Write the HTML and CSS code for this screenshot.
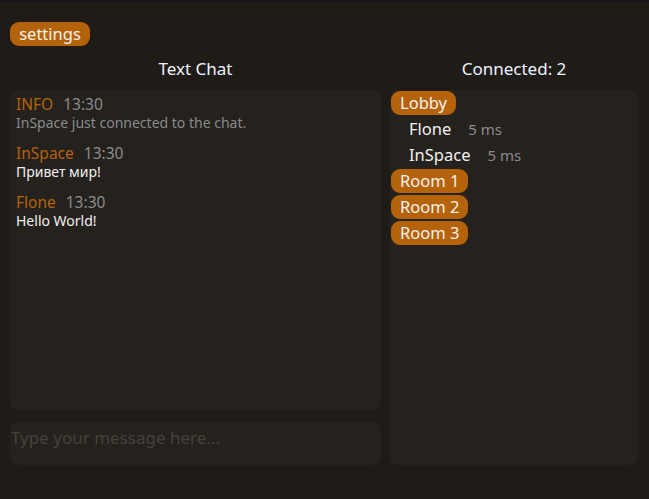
FILE: index.html
```html
<!DOCTYPE html>
<html>
<head>
<meta charset="utf-8">
<link rel="stylesheet" href="styles.css">
</head>
<body>
<div class="app">
  <div class="toolbar"><button class="pill settings">settings</button></div>
  <div class="columns">
    <div class="col chat-col">
      <div class="heading">Text Chat</div>
      <div class="panel messages">
        <div class="msg">
          <div class="meta"><span class="name">INFO</span><span class="time">13:30</span></div>
          <div class="text info">InSpace just connected to the chat.</div>
        </div>
        <div class="msg">
          <div class="meta"><span class="name">InSpace</span><span class="time">13:30</span></div>
          <div class="text">Привет мир!</div>
        </div>
        <div class="msg">
          <div class="meta"><span class="name">Flone</span><span class="time">13:30</span></div>
          <div class="text">Hello World!</div>
        </div>
      </div>
      <div class="panel input">Type your message here...</div>
    </div>
    <div class="col users-col">
      <div class="heading">Connected: 2</div>
      <div class="panel rooms">
        <div class="pill room">Lobby</div>
        <div class="user"><span class="uname">Flone</span><span class="ping">5 ms</span></div>
        <div class="user"><span class="uname">InSpace</span><span class="ping">5 ms</span></div>
        <div class="pill room">Room 1</div>
        <div class="pill room">Room 2</div>
        <div class="pill room">Room 3</div>
      </div>
    </div>
  </div>
</div>
</body>
</html>
```
FILE: styles.css
```css
html, body {
  margin: 0;
  padding: 0;
  background: #1f1c18;
  height: 100%;
}
body {
  font-family: "Noto Sans", "Open Sans", sans-serif;
  font-size: 15px;
  color: #f0f0f0;
  border-top: 2px solid #141419;
  box-sizing: border-box;
}
.app {
  padding: 20px 11px 0 10px;
}
.toolbar {
  display: flex;
  height: 24px;
}
.pill {
  background: #b5630a;
  color: #f4f0ea;
  border-radius: 9px;
  font-family: inherit;
  font-size: 16.5px;
  line-height: 24px;
  height: 24px;
  padding: 0 9px;
  border: none;
  box-sizing: border-box;
}
.settings {
  width: 80px;
  text-align: center;
  padding: 0;
}
.columns {
  display: grid;
  grid-template-columns: 371px 248px;
  gap: 9px;
  margin-top: 12px;
}
.col {
  display: flex;
  flex-direction: column;
}
.heading {
  text-align: center;
  font-size: 17px;
  line-height: 22px;
  height: 22px;
  margin-bottom: 10px;
  color: #eef2ff;
}
.panel {
  background: #25211d;
  border-radius: 8px;
}
.messages {
  height: 320px;
  padding: 4px 6px;
  box-sizing: border-box;
}
.msg {
  margin-bottom: 12px;
}
.meta {
  display: flex;
  gap: 10px;
  line-height: 20px;
  font-size: 15.5px;
}
.name {
  color: #b5630a;
}
.time {
  color: #8a8c8d;
}
.text {
  line-height: 17px;
  font-size: 14px;
}
.text.info {
  color: #888a8b;
}
.input {
  margin-top: 12px;
  height: 43px;
  padding: 5px 1px;
  box-sizing: border-box;
  color: #45413c;
  font-size: 17px;
  line-height: 22px;
}
.rooms {
  height: 375px;
  padding: 1px;
  box-sizing: border-box;
  display: flex;
  flex-direction: column;
  align-items: flex-start;
  gap: 2px;
}
.room {
  padding: 0 9px;
}
.user {
  display: flex;
  align-items: baseline;
  gap: 17px;
  padding-left: 18px;
  line-height: 24px;
  height: 24px;
  font-size: 16.5px;
}
.ping {
  color: #8a8c8d;
  font-size: 15px;
}
```
